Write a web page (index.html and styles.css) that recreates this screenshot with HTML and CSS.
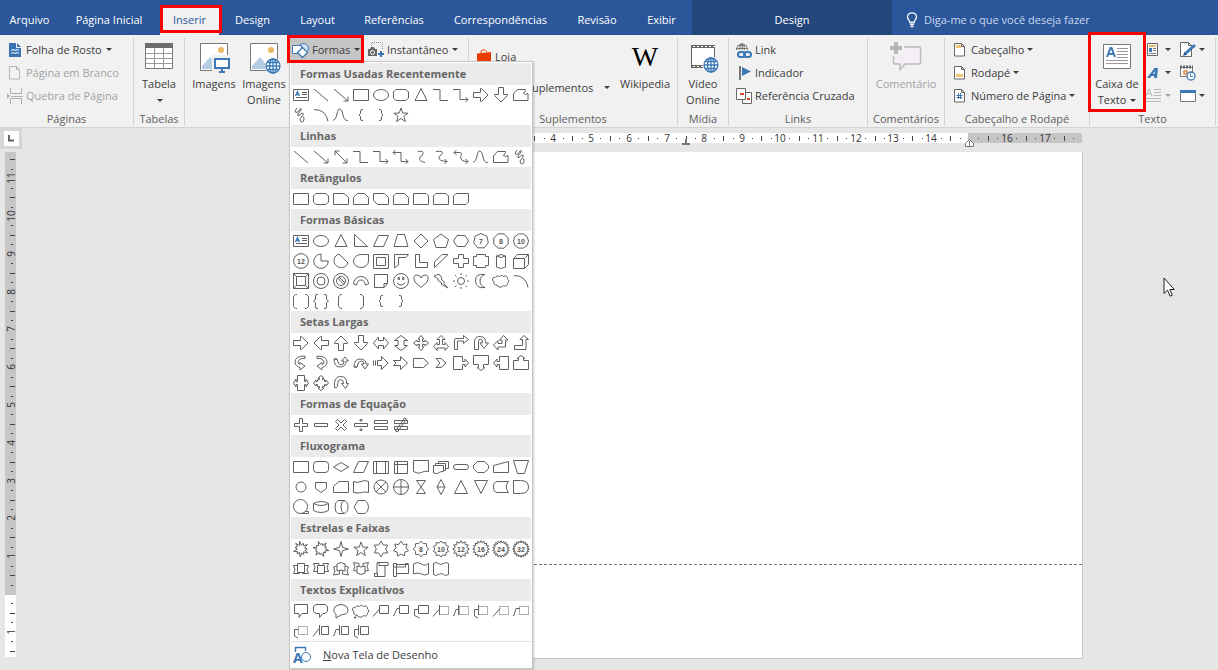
FILE: index.html
```html
<!DOCTYPE html>
<html lang="pt-BR">
<head>
<meta charset="utf-8">
<title>Inserir - Formas</title>
<link rel="stylesheet" href="styles.css">
</head>
<body>
<nav class="tabs" aria-label="Faixa de opções">
  <button class="tab">Arquivo</button>
  <button class="tab">Página Inicial</button>
  <button class="tab tab-active marked">Inserir</button>
  <button class="tab">Design</button>
  <button class="tab">Layout</button>
  <button class="tab">Referências</button>
  <button class="tab">Correspondências</button>
  <button class="tab">Revisão</button>
  <button class="tab">Exibir</button>
  <button class="tab tab-context">Design</button>
  <button class="tell-me">
    <svg width="12" height="16" viewBox="0 0 12 16" fill="none" stroke="#fff" stroke-width="1.3"><path d="M4 10.500C4 8.500 1.500 7.500 1.500 5a4.500 4.200 0 0 1 9 0C10.500 7.500 8 8.500 8 10.500ZM4 12.500h4M4.500 14.500h3"/></svg>
    <span>Diga-me o que você deseja fazer</span>
  </button>
</nav>

<main class="ribbon">
  <section class="group">
    <div class="group-body stack pages">
      <button class="small"><svg class="ico" viewBox="0 0 16 16"><path fill="#3a74b0" d="M2 1h7v5h5v9H2z"/><path fill="#3a74b0" d="M10 1l4 4h-4z"/><path d="M4 8.500l2-1 2 1 2-1 2 1M4 11.500l2-1 2 1 2-1 2 1" fill="none" stroke="#fff"/></svg>Folha de Rosto<i class="caret"></i></button>
      <button class="small" disabled><svg class="ico" viewBox="0 0 16 16" fill="#f5f1f5" stroke="#b5b5b5"><path d="M2.500 1.500h7l3 3v9.500h-10zM9.500 1.500v3h3"/></svg>Página em Branco</button>
      <button class="small" disabled><svg class="ico" viewBox="0 0 16 16" fill="none" stroke="#b0b0b0"><path d="M3.500 0v5.500h11V0M3.500 16v-5.500h11V16M4 8.500h12"/><path fill="#b0b0b0" stroke="none" d="M0 5l3 3-3 3z"/></svg>Quebra de Página</button>
    </div>
    <h2 class="group-name">Páginas</h2>
  </section>

  <section class="group">
    <div class="group-body center">
      <button class="big"><svg class="bigico" viewBox="0 0 32 32"><path fill="#fff" stroke="#777" d="M2.500 2.500h27v24h-27z"/><path fill="#6d6d6d" d="M2 1h28v5H2z"/><path fill="none" stroke="#999" d="M3 11.500h26M3 16.500h26M3 21.500h26M11.500 6v20M20.500 6v20"/></svg>Tabela<span class="line"><i class="caret"></i></span></button>
    </div>
    <h2 class="group-name">Tabelas</h2>
  </section>

  <section class="group">
    <div class="group-body pictures">
      <button class="big w50"><svg class="bigico" viewBox="0 0 32 32"><path fill="#fff" stroke="#777" d="M2.500 1.500h27v27h-27z"/><circle cx="23" cy="8" r="3" fill="#eab765"/><path fill="#b5cde3" d="M4 27V24l8-9 10 12z"/><path fill="#f1f1f1" d="M14 13h18v19H14z"/><path fill="#fff" stroke="#3b78b5" stroke-width="2" d="M17 17h14v9H17z"/><path fill="#3b78b5" d="M23 27h2v2h2v2h-6v-2h2z"/></svg>Imagens</button>
      <button class="big w50"><svg class="bigico" viewBox="0 0 32 32"><path fill="#fff" stroke="#777" d="M2.500 1.500h27v27h-27z"/><circle cx="23" cy="8" r="3" fill="#eab765"/><path fill="#b5cde3" d="M4 27V24l8-9 10 12z"/><circle cx="25" cy="24" r="8" fill="#fff"/><g fill="none" stroke="#3b78b5" stroke-width="1.300"><circle cx="25" cy="24" r="7"/><ellipse cx="25" cy="24" rx="3.500" ry="7"/><path d="M18 24h14M25 17v14M19.500 20.500h11M19.500 27.500h11"/></g></svg>Imagens Online</button>
      <div class="menu-anchor">
        <button class="small shapes marked" aria-expanded="true"><svg width="20" height="18" viewBox="0 0 20 18" fill="#fff" stroke="#3b78b5"><path fill="#d4e3f1" d="M9 3.500a5.500 5 0 0 1 8.500 3.500q0 3-2.500 4.500z"/><path d="M1.500 4.500h9v8h-9z"/><path stroke-width="1.300" d="M11.500 6.500l5 5-5 5-5-5z"/></svg>Formas<i class="caret"></i></button>
        <div class="menu" id="menu">
          <div id="gallery"></div>
          <button class="menu-item"><svg width="20" height="20" viewBox="0 0 20 20" fill="none" stroke="#3b78b5"><path d="M2.500 7V2.500h10V6" stroke-width="1.400"/><circle cx="13" cy="12" r="4.500"/><text x="0" y="18" class="new-canvas-a">A</text></svg><span><u>N</u>ova Tela de Desenho</span></button>
        </div>
      </div>
      <button class="small snap"><svg class="ico" viewBox="0 0 16 16"><path fill="none" stroke="#888" stroke-dasharray="1 1" d="M3.500 4V.5h11V7"/><path fill="#666" d="M0 7h2l1-2h3l1 2h2v7H0z"/><circle cx="4.500" cy="10.500" r="2" fill="#666" stroke="#fff"/><path stroke="#3b78b5" stroke-width="2" d="M13 9v6M10 12h6"/></svg>Instantâneo<i class="caret"></i></button>
    </div>
  </section>

  <section class="group">
    <div class="group-body addins">
      <div class="addin-list">
        <button class="small"><svg class="ico" viewBox="0 0 16 16"><path fill="#eb3c00" d="M1 4.500L15 3v13H1z"/><path fill="none" stroke="#eb3c00" d="M5 4V2q3-3 6 1"/></svg>Loja</button>
        <button class="small"><svg class="ico" viewBox="0 0 16 16"><path fill="#eb3c00" d="M2 2h12v12H2z"/></svg>Meus Suplementos<i class="caret far"></i></button>
      </div>
      <button class="big w60"><svg class="bigico" viewBox="0 0 32 32"><text x="16" y="24" class="wiki" text-anchor="middle">W</text></svg>Wikipedia</button>
    </div>
    <h2 class="group-name">Suplementos</h2>
  </section>

  <section class="group">
    <div class="group-body center">
      <button class="big w50"><svg class="bigico" viewBox="0 0 32 32"><path fill="#fff" stroke="#666" d="M4.500 3.500h23v22h-23z"/><path stroke="#666" stroke-width="3" d="M4 4.500h24M4 24.500h15"/><path stroke="#fff" stroke-dasharray="2 2" d="M6 4.500h22M6 24.500h12"/><circle cx="24" cy="23" r="8.500" fill="#fff"/><g fill="none" stroke="#3b78b5" stroke-width="1.300"><circle cx="24" cy="23" r="7"/><ellipse cx="24" cy="23" rx="3.500" ry="7"/><path d="M17 23h14M24 16v14M18.500 19.500h11M18.500 26.500h11"/></g></svg>Vídeo Online</button>
    </div>
    <h2 class="group-name">Mídia</h2>
  </section>

  <section class="group">
    <div class="group-body stack links">
      <button class="small"><svg class="ico" viewBox="0 0 16 16" fill="none"><g stroke="#777"><path d="M.5 8a5.500 6 0 0 1 11 0M3.500 8q0-5 2.500-6.500Q8.500 3 8.500 8M0 6.500h11.500M1.500 3.500h9M6 1v7"/></g><g stroke="#3b78b5" stroke-width="2"><rect x="2" y="10" width="7" height="5" rx="2.500"/><rect x="8" y="10" width="7" height="5" rx="2.500"/></g></svg>Link</button>
      <button class="small"><svg class="ico" viewBox="0 0 16 16"><path fill="#777" d="M3 1h2v14H3z"/><path fill="#3b78b5" d="M6 2l9 4.500L6 11z"/></svg>Indicador</button>
      <button class="small"><svg class="ico" viewBox="0 0 16 16" fill="#fff" stroke="#666"><path d="M6.500 4.500h9v11h-9z"/><path d="M.5 .5h9v11h-9z"/><path stroke="#d24726" stroke-width="2" d="M4 6h4M11 11h3"/></svg>Referência Cruzada</button>
    </div>
    <h2 class="group-name">Links</h2>
  </section>

  <section class="group">
    <div class="group-body center">
      <button class="big w70" disabled><svg class="bigico" viewBox="0 0 32 32"><path fill="#f5eff5" stroke="#bbb" stroke-width="1.500" d="M4 5h25q1.500 0 1.500 1.500v14Q30.500 22 29 22H15l-5 5.500V22H5q-1.500 0-1.500-1.500z"/><path stroke="#f1f1f1" stroke-width="7" d="M6 0v14M0 6h14"/><path stroke="#b5b5b5" stroke-width="4" d="M6 0v12M0 6h12"/></svg>Comentário</button>
    </div>
    <h2 class="group-name">Comentários</h2>
  </section>

  <section class="group">
    <div class="group-body stack headers">
      <button class="small"><svg class="ico" viewBox="0 0 16 16" fill="#fff" stroke="#666"><path d="M1.500 1.500h7l3 3v9.500h-10zM8.500 1.500v3h3"/><path fill="#f0c574" stroke="none" d="M3 3h5v3H3z"/></svg>Cabeçalho<i class="caret"></i></button>
      <button class="small"><svg class="ico" viewBox="0 0 16 16" fill="#fff" stroke="#666"><path d="M1.500 1.500h7l3 3v9.500h-10zM8.500 1.500v3h3"/><path fill="#f0c574" stroke="none" d="M3 9h7v3H3z"/></svg>Rodapé<i class="caret"></i></button>
      <button class="small"><svg class="ico" viewBox="0 0 16 16" fill="#fff" stroke="#666"><path d="M1.500 1.500h7l3 3v9.500h-10zM8.500 1.500v3h3"/><path stroke="#3b78b5" d="M5.500 5v6M7.500 5v6M3.500 7.500h6M3.500 9.500h6"/></svg>Número de Página<i class="caret"></i></button>
    </div>
    <h2 class="group-name">Cabeçalho e Rodapé</h2>
  </section>

  <section class="group">
    <div class="group-body texts">
      <button class="big text-box marked"><svg class="bigico" viewBox="0 0 32 32"><path fill="#fff" stroke="#777" d="M2.500 2.500h27v24h-27z"/><path stroke="#999" d="M16 6.500h11M16 9.500h11M16 12.500h11M16 15.500h11M5 18.500h22M5 21.500h22"/><path fill="none" stroke="#3b78b5" stroke-width="2" d="M6 15l3.500-9h1L14 15M7.500 12h5"/></svg>Caixa de<span class="line">Texto<i class="caret"></i></span></button>
      <div class="tiny-grid">
        <button class="tiny" aria-label="Partes Rápidas"><svg class="ico" viewBox="0 0 16 16"><path fill="#fff" stroke="#666" d="M1.500 1.500h10v12h-10z"/><path fill="#e8b56a" d="M3 3h7v2H3z"/><path fill="#3b78b5" d="M3 6h3v4H3z"/><path stroke="#777" d="M7 6.500h3M7 8.500h3M3 11.500h7"/></svg><i class="caret"></i></button>
        <button class="tiny" aria-label="Linha de Assinatura"><svg class="ico" viewBox="0 0 16 16"><path fill="#fff" stroke="#666" d="M.5 .5h8l3 3v11H.5zM8.500 .5v3h3"/><path stroke="#3b78b5" stroke-width="3" d="M6 11l9-8"/><path fill="#2b579a" d="M3 14l1.500-4.500 3 3z"/></svg><i class="caret"></i></button>
        <button class="tiny" aria-label="WordArt"><svg class="ico" viewBox="0 0 16 16"><path fill="#3b78b5" fill-rule="evenodd" d="M1 13L8.500 3H12l-1 10H8l.3-2H5.500L4 13zM6.800 9h1.800l.4-3z"/></svg><i class="caret"></i></button>
        <button class="tiny" aria-label="Data e Hora"><svg class="ico" viewBox="0 0 16 16"><path fill="#fff" stroke="#777" d="M.5 2.500h12v9H.5z"/><path stroke="#666" stroke-width="3" stroke-dasharray="2 1" d="M0 2h13"/><path fill="none" stroke="#d98a4a" stroke-width="1.500" d="M4 6h3v3H4z"/><circle cx="11" cy="11" r="4" fill="#fff" stroke="#3b78b5" stroke-width="1.300"/><path fill="none" stroke="#3b78b5" d="M10.500 8.500v3H13"/></svg></button>
        <button class="tiny" aria-label="Letra Capitular" disabled><svg class="ico" viewBox="0 0 16 16" fill="none" stroke="#b8b8b8"><path d="M0 8l3-7 3 7M1.500 5.500h3M8 1.500h7M8 4.500h7M8 7.500h7M0 10.500h15M0 13.500h15"/></svg><i class="caret"></i></button>
        <button class="tiny" aria-label="Objeto"><svg class="ico" viewBox="0 0 16 16"><path fill="#fff" stroke="#777" d="M.5 2.500h15v11H.5z"/><path fill="#3b78b5" d="M0 2h16v3H0z"/></svg><i class="caret"></i></button>
      </div>
    </div>
    <h2 class="group-name">Texto</h2>
  </section>
</main>

<div class="workspace">
  <div class="corner"><button class="tab-stop" aria-label="Tabulação esquerda"><svg width="7" height="7" viewBox="0 0 7 7"><path d="M1 0v5.500h5" fill="none" stroke="#666" stroke-width="2"/></svg></button></div>
  <div class="ruler-row">
    <svg class="ruler-h" id="ruler-h"></svg>
  </div>
  <div class="ruler-col"><svg class="ruler-v" id="ruler-v"></svg></div>
  <div class="canvas">
    <article class="page"><div class="page-text"></div><footer class="page-footer"></footer></article>
    <svg class="cursor" viewBox="0 0 12 20" width="12" height="20"><path fill="#fff" stroke="#222" d="M1 1v15.500l3.500-3.300 2.600 6 2.200-1-2.500-5.700h4.500z"/></svg>
  </div>
</div>
<script src="app.js"></script>
</body>
</html>
```

FILE: styles.css
```css
* { box-sizing: border-box; }
body {
  margin: 0;
  height: 100vh;
  display: flex;
  flex-direction: column;
  overflow: hidden;
  background: #e6e6e6;
  color: #3c3c3c;
  font: 11px/16px "Open Sans", "Noto Sans", sans-serif;
}
button {
  margin: 0;
  padding: 0;
  border: 0;
  background: none;
  color: inherit;
  font: inherit;
  white-space: nowrap;
}
button:disabled { color: #a3a3a3; }
svg { flex: none; display: block; }

/* Tabs */
.tabs {
  display: grid;
  grid-template-columns: 59px 100px 61px 65px 65px 88px 125px 68px 61px 200px 1fr;
  height: 35px;
  flex: none;
  background: #2b579a;
  color: #fff;
}
.tab { padding-top: 5px; }
.tab-active {
  margin: 7px 1px 0;
  padding: 0 0 2px;
  background: #f1f1f1;
  color: #2b579a;
}
.tab-context { background: #24477b; }
.tell-me {
  display: flex;
  align-items: center;
  gap: 6px;
  padding: 4px 0 0 14px;
  color: #c9d8ee;
}

/* Red call-out frames */
.marked { position: relative; }
.marked::after {
  content: "";
  position: absolute;
  z-index: 30;
  border: 3px solid #f00;
  pointer-events: none;
}
.tab-active::after { inset: -2px -3px 2px 0; }
.shapes::after { inset: -3px -1px -2px -2px; }
.text-box::after { inset: -6px -3px 0 -3px; }

/* Ribbon */
.ribbon {
  display: grid;
  grid-template-columns: 134px 51px 284px 209px 51px 139px 77px 145px 126px;
  flex: none;
  padding: 3px 0 1px;
  background: #f1f1f1;
  border-bottom: 1px solid #d2d2d2;
}
.group {
  display: flex;
  flex-direction: column;
  border-right: 1px solid #d2d2d2;
}
.group-body { display: flex; height: 74px; }
.group-name {
  margin: 0;
  font-size: 11px;
  line-height: 14px;
  font-weight: 400;
  text-align: center;
  color: #5f5f5f;
  white-space: nowrap;
}
.stack { flex-direction: column; align-items: flex-start; }
.center { justify-content: center; }
.small {
  display: flex;
  align-items: center;
  height: 23px;
  gap: 3px;
}
.ico { width: 16px; height: 16px; }
.caret {
  display: inline-block;
  width: 0;
  height: 0;
  border: 3px solid transparent;
  border-top-color: currentColor;
  border-bottom: 0;
  margin-left: 1px;
}
.far { margin-left: 8px; }
.big {
  display: flex;
  flex-direction: column;
  align-items: center;
  padding-top: 4px;
  white-space: normal;
}
.bigico { width: 32px; height: 32px; margin-bottom: 2px; overflow: visible; }
.line { display: flex; align-items: center; gap: 3px; height: 16px; }
.w50 { width: 50px; }
.w60 { width: 60px; }
.w70 { width: 70px; }
.pages { padding-left: 7px; }
.links { padding-left: 7px; }
.headers { padding-left: 8px; }
.headers .small { gap: 2px; }
.pictures { padding-left: 4px; }
.menu-anchor { position: relative; }
.shapes { width: 74px; padding-left: 2px; gap: 1px; background: #c5c5c5; }
.shapes .caret { margin-left: 3px; }
.snap { padding-left: 5px; }
.addins { padding-left: 7px; }
.addin-list { width: 139px; padding-top: 3px; }
.addin-list .small { height: 31px; }
.wiki { font: 28px "Liberation Serif", serif; fill: #000; }
.texts { padding-left: 1px; }
.text-box { width: 52px; }
.tiny-grid {
  display: grid;
  grid-template-columns: 32px 32px;
  grid-auto-rows: 23px;
  padding-left: 3px;
  column-gap: 2px;
}
.tiny { display: flex; align-items: center; gap: 2px; }

/* Shapes menu */
.menu {
  position: absolute;
  z-index: 20;
  top: 23px;
  left: 0;
  width: 244px;
  padding: 1px;
  background: #fff;
  border: 1px solid #c6c6c6;
  box-shadow: 1px 1px 2px #0003;
}
.menu-title {
  margin: 0;
  padding-left: 9px;
  font-size: 11px;
  line-height: 22px;
  font-weight: 700;
  color: #666;
  background: #ebebeb;
}
.shape-grid { display: grid; grid-template-columns: repeat(12, 20px); }
.shape { width: 20px; height: 20px; }
.shape svg { fill: none; stroke: #606060; }
.shape text { font: 700 7px "Liberation Sans", sans-serif; fill: #555; stroke: none; }
.menu-item {
  display: flex;
  align-items: center;
  width: 100%;
  height: 26px;
  padding-left: 2px;
  gap: 10px;
  border-top: 1px solid #e1e1e1;
}
.new-canvas-a { font: 700 14px "Open Sans", sans-serif; fill: #3b78b5; stroke: none; }

/* Workspace */
.workspace {
  flex: 1;
  min-height: 0;
  display: grid;
  grid-template-columns: 22px 1fr;
  grid-template-rows: 24px 1fr;
}
.corner { width: 22px; height: 21px; padding: 3px 4px; background: #d6d6d6; }
.tab-stop {
  display: grid;
  place-items: center;
  width: 15px;
  height: 15px;
  background: #fff;
}
.ruler-row { padding: 5px 136px 0 267px; }
.ruler-h {
  width: 100%;
  height: 15px;
  background: linear-gradient(to right, #c6c6c6 113px, #fff 113px calc(100% - 114px), #c6c6c6 calc(100% - 114px)) top / 100% 10px no-repeat;
}
.ruler-col { padding: 0 6px 13px 5px; }
.ruler-v {
  width: 11px;
  height: 100%;
  background: linear-gradient(#c6c6c6 443px, #fff 443px);
}
.ruler-h text, .ruler-v text { font: 10px "Open Sans", sans-serif; fill: #333; text-anchor: middle; }
.ruler-h path, .ruler-v path { stroke: #444; }
.ruler-h .stop { stroke: #777; }
.canvas { position: relative; display: flex; padding: 0 135px 11px 267px; }
.page {
  flex: 1;
  display: flex;
  flex-direction: column;
  background: #fff;
  border: solid #c6c6c6;
  border-width: 0 1px 1px 0;
}
.page-text { flex: 1; }
.page-footer { height: 94px; border-top: 1px dashed #777; }
.cursor { position: absolute; left: 1141px; top: 125px; }
```

FILE: app.js
```javascript
const polar = (count, radii, turn = -90, cx = 10, cy = 10) => {
  let d = "";
  for (let i = 0; i < count; i++) {
    const r = radii[i % radii.length];
    const a = (turn + (360 * i) / count) * Math.PI / 180;
    d += (i ? "L" : "M") + (cx + r * Math.cos(a)).toFixed(1) + " " + (cy + r * Math.sin(a)).toFixed(1);
  }
  return d + "Z";
};
const label = (n, d) => `<path d="${d}"/><text x="10" y="12.500" text-anchor="middle">${n}</text>`;
const circle = (r, cx = 10, cy = 10) => `M${cx - r} ${cy}a${r} ${r} 0 1 0 ${2 * r} 0a${r} ${r} 0 1 0 ${-2 * r} 0`;
const dotted = (lead, x = 9) => `<path d="${lead}"/><path stroke-dasharray="1 1" d="M${x}.5 5.500h9v8h-9z"/>`;
const bumps = "M6 14a2.500 2.500 0 0 1-3-3.500 2 2 0 0 1 1-4 3 2.500 0 0 1 4.500-1 2.500 2.500 0 0 1 4 0 2.500 2.500 0 0 1 4 2.500 2.200 2.200 0 0 1 0 4 2.500 2.500 0 0 1-4 2.500 3.500 3 0 0 1-6.500-.5z";

const S = {
  textbox: '<path d="M2.500 4.500h15v11h-15zM11 7.500h5M11 9.500h5M5 12.500h11"/><path stroke="#3b78b5" stroke-width="1.300" d="M4.500 11L6.500 6.500L8.500 11M5 9.500h3"/>',
  line: "M3 4l14 12",
  arrow: "M3 4l14 12M17 11.500V16H12.500",
  dblarrow: "M4 4l12 12M16 11.500V16H11.500M4 8.500V4h4.500",
  rect: "M2.500 4.500h15v11h-15z",
  oval: '<ellipse cx="10" cy="10" rx="7.500" ry="5.500"/>',
  rrect: "M5 4.500h10l2.500 2.500v6L15 15.500H5L2.500 13V7z",
  tri: "M10 3.500l6 12H4z",
  elbow: "M2 4.500h7v11h8",
  elbowArrow: "M2 4.500h7v10h8M14.500 12l2.500 2.500-2.500 2.500",
  elbowDbl: "M2 5.500h8v9h7M14.500 12l2.500 2.500-2.500 2.500M4.500 3L2 5.500 4.500 8",
  rArrow: "M2.500 7.500h7v-4h1l6.500 6.500-6.500 6.500h-1v-4h-7z",
  lArrow: "M17.500 7.500h-7v-4h-1L3 10l6.500 6.500h1v-4h7z",
  uArrow: "M7.500 17.500v-7h-4v-1L10 3l6.500 6.500v1h-4v7z",
  dArrow: "M7.500 2.500v7h-4v1L10 17l6.500-6.500v-1h-4v-7z",
  freeform: "M2.500 15.500V9l4-4.500h8v1l-2 3q2 2 4.500 0v7z",
  scribble: "M6 3Q3 7 5 7.500t4-3.500q2-1 1 1L7 9q-1 2 1 1.500L11 8q2 0 1 2l-3 4q0 3 2 3t2-3-1-2",
  arc: "M3 4.500q12 0 14 12",
  curve: "M2 15.500Q5 15 6 9t3-5q2 0 3 6t5 5.500",
  lbrace: "M12 4.500h-1Q9.500 4.500 9.500 6v2.500L8 10l1.500 1.500V14q0 1.500 1.500 1.500h1",
  rbrace: "M8 4.500h1q1.500 0 1.500 1.500v2.500L12 10l-1.500 1.500V14q0 1.500-1.500 1.500H8",
  star5: polar(10, [7.5, 3], -90, 10, 10.5),
  cconn: "M7 4.500q6-1 5 2T9 10q-2 4 5 5.500",
  cconnArrow: "M5 4.500q8-1 6 2T8 10q-1 4 8 4.500M13.500 12l2.500 2.500-2.500 2.500",
  cconnDbl: "M3 5.500h5q4 0 2 3-2 6 7 6M14.500 12l2.500 2.500-2.500 2.500M5.500 3L3 5.500 5.500 8",
  snip1: "M2.500 4.500H13l4.500 4v7h-15z",
  snip2: "M2.500 15.500V8.500l4-4h7l4 4v7z",
  snipDiag: "M2.500 4.500h11l4 4v7h-11l-4-4z",
  snipRound: "M2.500 15.500V7L5 4.500h8.500l4 4v7z",
  round1: "M2.500 4.500H15L17.500 7v8.500h-15z",
  round2: "M2.500 15.500V7L5 4.500h10L17.500 7v8.500z",
  roundDiag: "M2.500 15.500V7L5 4.500h12.500V13L15 15.500z",
  rtri: "M3.500 3.500v12h13z",
  para: "M7.500 4.500h10l-5 11h-10z",
  trap: "M6.500 3.500h7l3.500 12H3z",
  diamond: "M10 3l7 7-7 7-7-7z",
  pentagon: "M10 3l7.500 5.500-2.500 8H5l-2.500-8z",
  hexagon: "M6 4.500h8l3.500 5.500-3.500 5.500H6L2.500 10z",
  n7: label(7, polar(7, [7.5], -90)), n8: label(8, polar(8, [7.8], -67.5)),
  n10: label(10, polar(10, [7.5], 0)), n12: label(12, polar(12, [7.5], -75)),
  pie: "M10 3a7.200 7.200 0 1 0 7.200 7H10z",
  chord: "M8 3a7.200 7 0 1 0 9 9z",
  tear: "M17.500 3.500V10a7.500 6.500 0 1 1-7.500-6.500z",
  frame: "M2.500 3.500h15v14h-15zM5.500 6.500h9v8h-9z",
  half: "M3.500 3.500h14L15 6.500H7.500V14l-4 3z",
  ell: "M4.500 3.500h4v8h8v5h-12z",
  stripe: "M3.500 11v5.500L17 3.500h-6z",
  cross: "M7.500 3.500h5v4h5v5h-5v4h-5v-4h-5v-5h5z",
  plaque: "M5.500 3.500h9v2h3v9h-3v2h-9v-2h-3v-9h3z",
  can: "M5.500 5v11q4.500 3 9 0V5M5.500 5q4.500 3 9 0-4.500-3-9 0z",
  cube: "M2.500 7.500h11v10h-11zM2.500 7.500l4-4h11v10l-4 4M17.500 3.500l-4 4",
  bevel: "M2.500 2.500h15v15h-15zM5.500 5.500h9v9h-9zM2.500 2.500l3 3M17.500 2.500l-3 3M2.500 17.500l3-3M17.500 17.500l-3-3",
  donut: circle(7.5) + circle(4),
  no: circle(7.5) + circle(4.5) + "M6.500 7l6.500 6.500M8 6l6 6",
  blockArc: "M2.500 13a7.500 7.500 0 0 1 15 0l-3 1q-1-5-4.500-5T5.500 14z",
  fold: "M3.500 3.500h13v9l-3.500 4H3.500zM13 16.500v-4h3.500",
  smiley: circle(7.5) + "M6 12q4 4 8 0M7 6.500h1.500v2H7zM11.500 6.500H13v2h-1.500z",
  heart: "M10 16.500L4 11q-3-7 2-7 3 0 4 3 1-3 4-3 5 0 2 7z",
  bolt: "M3 5l5-2 3 4-1 1 3.500 3-1 1 4.500 5-7-4 1-1-4.500-3 1-1z",
  sun: circle(3.5) + "M10 2v2M10 16v2M2 10h2M16 10h2M4 4l1.500 1.500M14.500 14.500L16 16M4 16l1.500-1.500M14.500 5.500L16 4",
  moon: "M14 3.500Q4 2 4.500 10T14 16.500Q9 15 9 10t5-6.500z",
  cloud: bumps,
  dblBracket: "M6 3.500H4.500l-2 2v10l2 2H6M14 3.500h1.500l2 2v10l-2 2H14",
  dblBrace: "M7 3.500H6q-1.500 0-1.500 1.500v3.500L2.500 10l2 1.500V16q0 1.500 1.500 1.500h1M13 3.500h1q1.500 0 1.500 1.500v3.500l2 1.500-2 1.500V16q0 1.500-1.500 1.500h-1",
  lbracket: "M11 3.500H9.500L7.500 6v9l2 2.500H11",
  rbracket: "M9 3.500h1.500l2 2.500v9l-2 2.500H9",
  lrArrow: "M2.500 10l5-6v3.500h5V4l5 6-5 6v-3.500h-5V16z",
  udArrow: "M10 2.500l6.500 5H13v5h3.500l-6.500 5-6.500-5H7v-5H3.500z",
  quad: "M10 2.500l3 3.500h-1.500v2.500H14V7l3.500 3L14 13v-1.500h-2.500V14H13l-3 3.500L7 14h1.500v-2.500H6V13l-3.500-3L6 7v1.500h2.500V6H7z",
  triArrow: "M10 2.500l4 4h-2.500v5H14V9.500l3.500 4-3.500 4v-2.500H6v2.500l-3.500-4 3.500-4v2h2.500v-5H6z",
  bent: "M3.500 16.500V7q0-1.500 1.500-1.500h7.500v-3l5 4-5 4v-2.500h-6v8.500z",
  uturn: "M3.500 16.500V8q1-5 6-4.500 5 .5 5 5v1.500h3l-4.500 5.500-4-5.500h2.500q0-4-2-4t-2 3v7.500z",
  leftUp: "M2.500 12l4.500-4.500v3h4V7H8.500l4-4.500L17 7h-2.500v7H7v3z",
  bentUp: "M3.500 12.500h8v-6H9l4-4 4.500 4h-2.500v10H3.500z",
  curveR: "M14 3Q4 3 4 9q0 4 5 5.500V17l5-4-5-3.500v2Q7 11 7 9q1-4 7-3.500z",
  curveL: "M6 3q10 0 10 6 0 4-5 5.500V17l-5-4 5-3.500v2q2-.5 2-2.500-1-4-7-3.500z",
  curveU: "M3 6q0 8 6 8t6-6h2.500L14 4l-3.500 4H13q0 4-3 4T6 6zM6 6H3",
  curveD: "M3 14q0-8 6-8t6 5h2.500L14 16l-3.500-5H13q0-3-3-3t-4 6zM6 14H3",
  striped: "M2.500 7.500v5M4.500 7.500v5M6.500 7.500h4v-4L17 10l-6.500 6.500v-4h-4z",
  notched: "M2.500 7.500h7v-4L16.500 10l-7 6.500v-4h-7l2.500-2.500z",
  homePlate: "M2.500 5.500h10L17.500 10l-5 4.500h-10z",
  chevron: "M5 5.500h5L15 10l-5 4.500H5l4-4.500z",
  rCall: "M2.500 3.500h9v5h2.500V6l3.500 4-3.500 4v-2.500h-2.500v5h-9z",
  dCall: "M2.500 2.500h15v9h-5v3H14L10 17.500 6 14.500h1.500v-3h-5z",
  lCall: "M17.500 3.500h-9v5H6V6l-3.500 4L6 14v-2.500h2.500v5h9z",
  uCall: "M2.500 16.500h15v-9h-5v-2H14L10 2.500 6 5.500h1.500v2h-5z",
  lrCall: "M6.500 2.500h7v6H15V6l2.500 4L15 14v-2.500h-1.500v6h-7v-6H5V14l-2.500-4L5 6v2.500h1.500z",
  quadCall: "M10 2.500L13 5h-1.500v1.500h2v2H15V7l2.500 3L15 13v-1.500h-1.500v2h-2V15H13l-3 2.500L7 15h1.500v-1.500h-2v-2H5V13l-2.500-3L5 7v1.500h1.500v-2h2V5H7z",
  circArrow: "M3.500 14.500q-1-11 6-11t6 7h2l-3 5-4-5h2q0-4-3-4t-3 7q-1 2-3 1z",
  plus: "M8.500 3.500h3v5h5v3h-5v5h-3v-5h-5v-3h5z",
  minus: "M3.500 8.500h13v3h-13z",
  times: "M4.500 6.500l2-2L10 8l3.500-3.500 2 2L12 10l3.500 3.500-2 2L10 12l-3.500 3.500-2-2L8 10z",
  divide: "M3.500 8.500h13v3h-13zM9 4.500h2v1.500H9zM9 14h2v1.500H9z",
  equal: "M3.500 5.500h13v3h-13zM3.500 11.500h13v3h-13z",
  notEqual: "M3.500 5.500h13v3h-13zM3.500 11.500h13v3h-13zM13.500 3l2 1-9 13-2-1z",
  fcRound: "M6 4.500h8q3.500 0 3.500 3v5q0 3-3.500 3H6q-3.500 0-3.500-3v-5q0-3 3.500-3z",
  fcDecision: "M10 5.500l7.500 4.500-7.500 4.500L2.500 10z",
  predef: "M2.500 4.500h15v12h-15zM5.500 4.500v12M14.500 4.500v12",
  internal: "M3.500 4.500h13v12h-13zM6.500 4.500v12M3.500 7.500h13",
  doc: "M2.500 3.500h15v11q-4-1-7 1t-8-1z",
  multidoc: "M2.500 8.500h10v6q-4 0-5 1.500t-5 0zM4.500 8V6.500h10v7h-2M7.500 6V4.500h10v7H15",
  terminator: "M5 7.500h10q2.500 0 2.500 2.500T15 12.500H5Q2.500 12.500 2.500 10T5 7.500z",
  prep: "M6.500 4.500h7l4 4v3l-4 4h-7l-4-4v-3z",
  manIn: "M2.500 8.500l15-4v11h-15z",
  manOp: "M2.500 3.500h15l-4 13h-7z",
  conn: circle(5), offpage: "M4.500 5.500h11v6L10 15.500l-5.500-4z",
  card: "M2.500 15.500V9.500L8 4.500h9.500v11z",
  tape: "M2.500 4.500q3 2 7.500 0t7.500 0v11q-4-1-7 0t-8 0z",
  sumJ: circle(7) + "M5 5l10 10M15 5L5 15", or: circle(7.5) + "M10 2.500v15M2.500 10h15",
  collate: "M5.500 3.500h9l-9 13h9z", sort: "M10 2.500l4 7.500-4 7.500L6 10zM6 10h8",
  extract: "M10 3.500l6.500 13h-13z", merge: "M3.500 3.500h13L10 16.500z",
  stored: "M6 4.500h11.500Q13 10 17.500 15.500H6Q2.500 15 2.500 10T6 4.500z",
  delay: "M2.500 3.500h7q8 0 8 6.500t-8 6.500h-7z",
  seq: circle(7, 9.5, 9.5) + "M9.500 16.500h8v-2h-3",
  disk: "M2.500 6.500v7q7.500 4 15 0v-7q-7.500 4-15 0 7.500-4 15 0",
  direct: "M7 3.500h6q4 1 4 6.500t-4 6.500H7Q4 15 4 10t3-6.500zM13 3.500Q10 5 10 10t3 6.500",
  display: "M7 3.500h7q3.500 2 3.500 6.500T14 16.500H7L3 10z",
  exp1: polar(22, [7.8, 3.8, 6.2, 4.2], -100), exp2: polar(24, [5.8, 4, 8, 4.4], -80),
  star4: polar(8, [7.5, 2.3]), star6: polar(12, [7.8, 4.6]), star7: polar(14, [7.8, 5]),
  s8: label(8, polar(16, [7.7, 6])), s10: label(10, polar(20, [8, 6.2])),
  s12: label(12, polar(24, [8.3, 6])), s16: label(16, polar(32, [8.3, 6.2])),
  s24: label(24, polar(36, [8.4, 6.2])), s32: label(32, polar(40, [8.4, 6.2])),
  rib1: "M6.500 4.500h7v9h-7zM6.500 6.500h-4L4 10.500l-1.500 4h6v-1M13.500 6.500h4l-1.500 4 1.500 4h-6v-1",
  rib2: "M6.500 14.500h7v-8h-7zM8 6.500v-2H2.500L4 8.500l-1.500 4h4M12 6.500v-2h5.500L16 8.500l1.500 4h-4",
  rib3: "M6 12V5q4-3 8 0v7q-4-2-8 0zM6 7L2.500 8l1.500 4-1.500 4 6-1v-3M14 7l3.500 1-1.500 4 1.500 4-6-1v-3",
  rib4: "M6 7v7q4 3 8 0V7q-4 2-8 0zM8 7V4.500L2.500 3.500l1.500 4-1.500 4L6 12M12 7V4.500l5.500-1-1.500 4 1.500 4-3.500.5",
  vscroll: "M6 3.500h11v3H14v11H3.500v-3H6v-11M8 3.500v3h6M3.500 14.500h3v3",
  hscroll: "M5.500 5.500h12v9h-12M2.500 7v10.500h3V4.500h-3V8h12V4.500h3",
  wave: "M2.500 5q4-3 8 0t7-1v11q-4 2-7 0t-8 0z",
  wave2: "M2.500 4.500q3-2 5 0t5 0 5 0v11q-3 2-5 0t-5 0-5 0z",
  c1: "M3.500 3.500h13v9H11l-3 4v-4H3.500z",
  c2: "M5 3.500h9l2.500 2v5l-2.500 2h-2l-3.500 4v-4H5l-2.500-2v-5z",
  c3: "M5 13Q1 10 4 6q6-5 12 0 4 7-6 8l-5 3z",
  c4: bumps + "M3.500 16h1.500v1H3.500z",
  l1: "M2 15.500l7-8M8.500 4.500h9v8h-9z", l2: "M2 14.500h1l3-7h2.500M8.500 4.500h9v8h-9z",
  l3: "M8.500 17l-5-2.500V8.500h4M7.500 4.500h10v8h-10z",
  l4: dotted("M2 15.500l6-7M8.500 4v10", 8), l5: dotted("M2 14.500h1l2-6h3M7.500 4v10", 8),
  l6: dotted("M7 17l-3.500-2V8.500h4M7.500 4v10", 7), l7: dotted("M2 15.500l7-8", 8), l8: dotted("M2 14.500h1l2-7h4", 8),
  l9: dotted("M7 17l-3.500-2V8.500h4", 7),
  l10: "M2 15.500l6-8M8.500 4v10M10.500 5.500h7v8h-7z", l11: "M2 14.500h1l2-6h3M8.500 4v10M10.500 5.500h7v8h-7z",
  l12: "M7 17l-3.500-2V8.500h4M7.500 4v10M9.500 5.500h8v8h-8z"
};

const sections = [
  ["Formas Usadas Recentemente", "textbox line arrow rect oval rrect tri elbow elbowArrow rArrow dArrow freeform scribble arc curve lbrace rbrace star5"],
  ["Linhas", "line arrow dblarrow elbow elbowArrow elbowDbl cconn cconnArrow cconnDbl curve freeform scribble"],
  ["Retângulos", "rect rrect snip1 snip2 snipDiag snipRound round1 round2 roundDiag"],
  ["Formas Básicas", "textbox oval tri rtri para trap diamond pentagon hexagon n7 n8 n10 n12 pie chord tear frame half ell stripe cross plaque can cube bevel donut no blockArc fold smiley heart bolt sun moon cloud arc dblBracket dblBrace lbracket rbracket lbrace rbrace"],
  ["Setas Largas", "rArrow lArrow uArrow dArrow lrArrow udArrow quad triArrow bent uturn leftUp bentUp curveR curveL curveU curveD striped notched homePlate chevron rCall dCall lCall uCall lrCall quadCall circArrow"],
  ["Formas de Equação", "plus minus times divide equal notEqual"],
  ["Fluxograma", "rect fcRound fcDecision para predef internal doc multidoc terminator prep manIn manOp conn offpage card tape sumJ or collate sort extract merge stored delay seq disk direct display"],
  ["Estrelas e Faixas", "exp1 exp2 star4 star5 star6 star7 s8 s10 s12 s16 s24 s32 rib1 rib2 rib3 rib4 vscroll hscroll wave wave2"],
  ["Textos Explicativos", "c1 c2 c3 c4 l1 l2 l3 l4 l5 l6 l7 l8 l9 l10 l11 l12"]
];

document.getElementById("gallery").innerHTML = sections.map(([title, names]) =>
  `<h3 class="menu-title">${title}</h3><div class="shape-grid">` +
  names.split(" ").map(n => {
    const art = S[n][0] === "<" ? S[n] : `<path d="${S[n]}"/>`;
    return `<button class="shape" aria-label="${n}"><svg width="20" height="20" viewBox="0 0 20 20">${art}</svg></button>`;
  }).join("") + "</div>").join("");

/* Rulers: numbers on whole centimetres, bars on halves, dots on quarters */
const CM = 37.8;
function ruler(from, to, origin, number, bar, dot) {
  let out = "";
  for (let q = from * 4; q <= to * 4; q++) {
    const at = Math.round(origin + (q * CM) / 4);
    if (q % 4 === 0) out += q ? number(Math.abs(q / 4), at) : "";
    else out += q % 2 === 0 ? bar(at) : dot(at);
  }
  return out;
}
document.getElementById("ruler-h").innerHTML = ruler(-3, 17.75, 113,
  (n, x) => n === 15 ? "" : `<text x="${x}" y="9">${n}</text>`,
  x => `<path d="M${x}.5 3v5"/>`, x => `<path d="M${x}.5 5v1"/>`) +
  '<path class="stop" fill="none" stroke-width="2" d="M397 6v5M393 11h8"/>' +
  '<path class="stop" style="fill:#fff" d="M676.500 13.500v-3l4-4 4 4v3zM680.500 8v5"/>';
document.getElementById("ruler-v").innerHTML = ruler(-11.5, 1.5, 442,
  (n, y) => `<text transform="translate(10 ${y}) rotate(-90)">${n}</text>`,
  y => `<path d="M5 ${y}.5h5"/>`, y => `<path d="M6 ${y}.5h2"/>`);
```
